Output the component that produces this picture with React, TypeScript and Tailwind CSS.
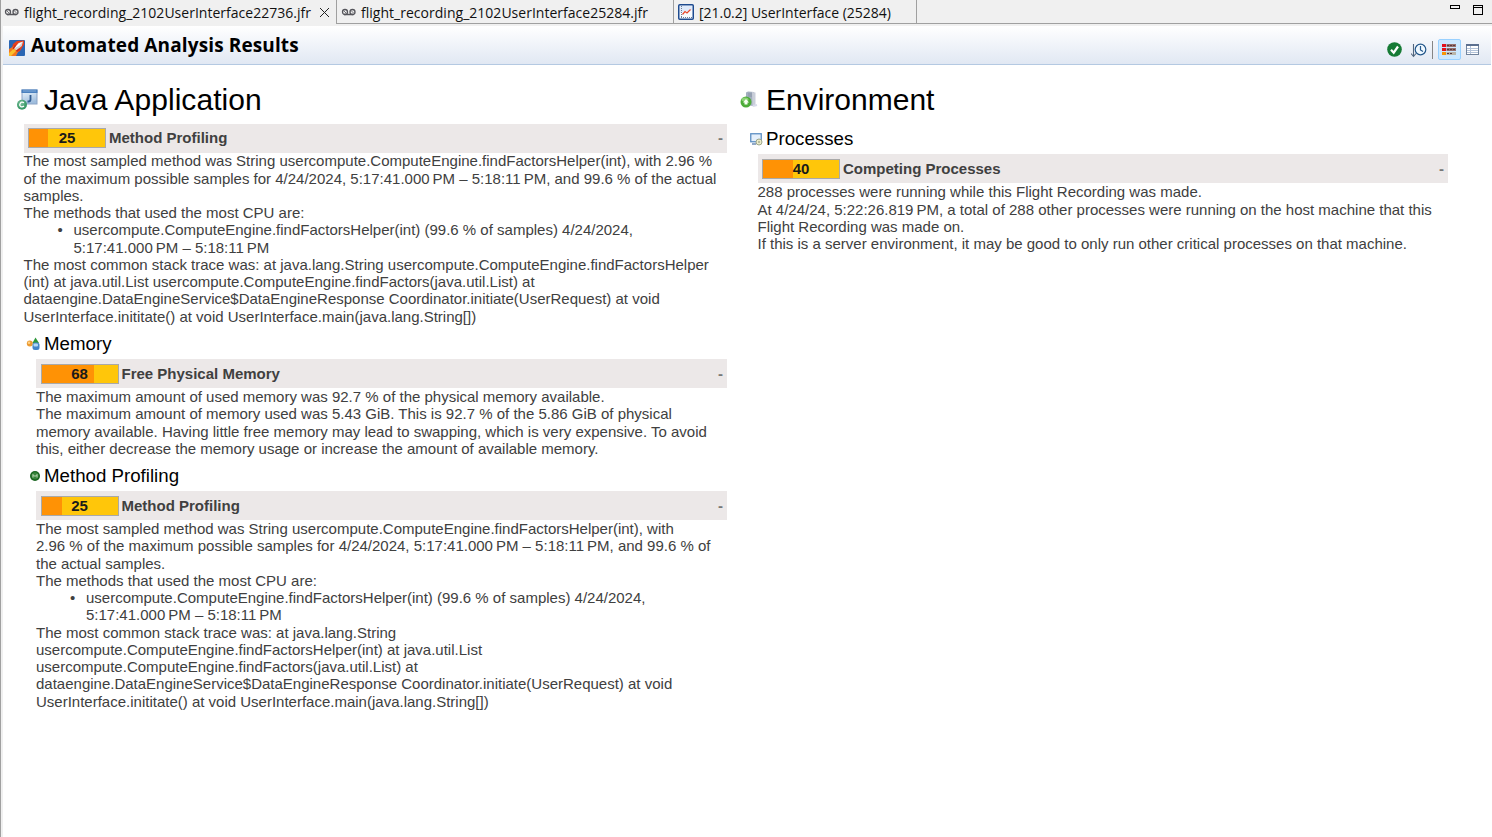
import React from "react";

function TapeIcon() {
  return (
    <svg width="16" height="16" viewBox="0 0 16 16" fill="none" stroke="#55555b" className="shrink-0">
      <circle cx="4" cy="8" r="2.5" strokeWidth="1.3" />
      <circle cx="11.5" cy="8" r="2.5" strokeWidth="1.3" />
      <path d="M3 10.5h9.5" strokeWidth="1.5" />
      <path d="M3 7l2 2M10.5 7l2 2" strokeWidth="0.8" />
    </svg>
  );
}

function ChartIcon() {
  return (
    <svg width="16" height="16" viewBox="0 0 16 16" className="shrink-0">
      <rect x="0.75" y="0.75" width="14.5" height="14.5" rx="1" fill="#f8fbff" stroke="#1d4a8f" strokeWidth="1.5" />
      <path d="M2 2h12v4L2 9z" fill="#dfeafa" />
      <path d="M3.5 2v11.5M3 13.5h11" stroke="#6c7c96" strokeWidth="1" strokeDasharray="1 1" fill="none" />
      <path d="M4.500 10.500l2.500-3 2 1.500L12.500 5.500" stroke="#e8482a" strokeWidth="1.200" fill="none" />
    </svg>
  );
}

function FlightIcon() {
  return (
    <svg width="16" height="16" viewBox="0 0 16 16" className="shrink-0">
      <rect width="16" height="16" rx="1" fill="#2a66b4" />
      <path d="M4 4L8 1l7-.5v4L11 11l-2 1-6-4z" fill="#e8401c" />
      <path d="M0 9l5-3 5 4-3 6H0z" fill="#f4771f" />
      <path d="M0 13l5-4.500L7 11l-5 5H0z" fill="#fbc02c" />
      <path d="M5 8.500L9.500 3 14 1.500 12.800 6 7.500 10.500z" fill="#d3d3da" />
      <path d="M5.500 8L10 3.300l3.500-1.300L10 6z" fill="#ffffff" />
      <path d="M3.500 8L6 5l1 .5-2.500 4zM8 12l3-2.500-.5-1.500L7 10.500z" fill="#c92a1a" />
    </svg>
  );
}

function JavaIcon() {
  return (
    <svg width="22" height="22" viewBox="0 0 22 22" className="shrink-0">
      <defs>
        <linearGradient id="jw" x2="0.3" y2="1">
          <stop stopColor="#f1f9fe" />
          <stop offset="1" stopColor="#9fbddd" />
        </linearGradient>
        <radialGradient id="jc" cx="0.4" cy="0.35">
          <stop stopColor="#80c4a0" />
          <stop offset="1" stopColor="#3c9a69" />
        </radialGradient>
      </defs>
      <rect x="6" y="1" width="15" height="14" fill="url(#jw)" stroke="#8ba4c6" />
      <rect x="5.500" y=".5" width="16" height="3.500" fill="#4a80be" />
      <path d="M7 2h13" stroke="#80aad8" />
      <path d="M14.500 6v4.500q0 2-2 2h-1" stroke="#315c91" strokeWidth="1.800" fill="none" />
      <circle cx="6" cy="15.800" r="5" fill="url(#jc)" />
      <path d="M8 13.800Q5.500 12.300 4.200 14.500T5.200 17.800q1.500.5 2.800-.8" stroke="white" strokeWidth="1.300" fill="none" />
    </svg>
  );
}

function ServerIcon() {
  return (
    <svg width="18" height="18" viewBox="0 0 18 18" className="shrink-0">
      <path d="M6 1.500L8 .5l6 .5 1 12-2 2-7-1z" fill="#a3afbf" />
      <path d="M12 1l3.500.5v13l-3 1z" fill="#c9ced9" />
      <path d="M8 3h4M8 5h4" stroke="#8793a6" />
      <path d="M13 15l4-1" stroke="#d9dbea" strokeWidth="2" />
      <circle cx="6" cy="11" r="5.500" fill="#4dac38" />
      <ellipse cx="5" cy="8.500" rx="3.500" ry="2" fill="#8bd177" />
      <path d="M6 8l3 3.500H7.500V13.500h-3v-2H3z" fill="#f7fff2" />
    </svg>
  );
}

function MemoryIcon() {
  return (
    <svg width="14" height="14" viewBox="0 0 14 14" className="shrink-0">
      <circle cx="3.800" cy="6.500" r="3" fill="#eb9a32" />
      <circle cx="3" cy="5.700" r="1.300" fill="#ffd184" />
      <path d="M9.500 .5l3.500 5.500H6.500z" fill="#2d9639" />
      <rect x="6.500" y="5.500" width="7" height="7.500" rx="2.500" fill="#4384ca" />
      <rect x="7.500" y="6.500" width="4.500" height="3" rx="1" fill="#b4d8f5" />
    </svg>
  );
}

function MethodIcon() {
  return (
    <svg width="10" height="10" viewBox="0 0 10 10" className="shrink-0">
      <circle cx="5" cy="5" r="5" fill="#19651f" />
      <circle cx="5" cy="4.700" r="3.500" fill="#38843c" />
      <path d="M3 6.500v-3L5 5.500l2-2v3" stroke="#d2e8ca" strokeWidth="0.900" fill="none" />
    </svg>
  );
}

function ProcessIcon() {
  return (
    <svg width="13" height="13" viewBox="0 0 13 13" className="shrink-0">
      <rect x="0.750" y="0.750" width="10.500" height="8" fill="#e4effb" stroke="#5c8fc4" strokeWidth="1.300" />
      <path d="M2 11h4" stroke="#6c8db3" strokeWidth="1.500" />
      <circle cx="9" cy="9" r="3" fill="#ececc9" stroke="#9da68b" />
      <circle cx="9" cy="9" r="1" fill="#a8ae8f" />
    </svg>
  );
}

function Tab({ icon, label, className }: { icon: React.ReactNode; label: string; className: string }) {
  return (
    <div className={"flex h-6 shrink-0 items-center whitespace-nowrap border-r border-[#a0a0a0] " + className}>
      {icon}
      {label}
    </div>
  );
}

function ScoreBar({ score, title, split, inset }: { score: number; title: string; split: number; inset: string }) {
  return (
    <div className={"flex h-[29px] items-center bg-[#ece8e8] pr-1 font-bold text-[#404040] " + inset}>
      <div className="grid h-5 w-[78px] border border-[#a9a9a9] bg-[#ffc60a] text-center leading-[18px] text-[#1a1a1a]">
        <div className="col-start-1 row-start-1 bg-[#ff9205]" style={{ width: split }} />
        <span className="col-start-1 row-start-1">{score}</span>
      </div>
      <span className="ml-[3px] grow">{title}</span>
      <span className="text-[#777]">-</span>
    </div>
  );
}

function Lines({ items }: { items: string[] }) {
  return (
    <div className="leading-[17.25px] text-[#404040]">
      {items.map((t) =>
        t.startsWith("* ") ? (
          <div key={t} className="flex whitespace-pre">
            <span className="w-[50px] pl-[34px]">•</span>
            <span>{t.slice(2)}</span>
          </div>
        ) : t.startsWith("> ") ? (
          <div key={t} className="whitespace-pre pl-[50px]">{t.slice(2)}</div>
        ) : (
          <div key={t} className="whitespace-pre">{t}</div>
        )
      )}
    </div>
  );
}

const appProfiling = [
  "The most sampled method was String usercompute.ComputeEngine.findFactorsHelper(int), with 2.96 %",
  "of the maximum possible samples for 4/24/2024, 5:17:41.000\u202fPM – 5:18:11\u202fPM, and 99.6 % of the actual",
  "samples.",
  "The methods that used the most CPU are:",
  "* usercompute.ComputeEngine.findFactorsHelper(int) (99.6 % of samples) 4/24/2024,",
  "> 5:17:41.000\u202fPM – 5:18:11\u202fPM",
  "The most common stack trace was: at java.lang.String usercompute.ComputeEngine.findFactorsHelper",
  "(int) at java.util.List usercompute.ComputeEngine.findFactors(java.util.List) at",
  "dataengine.DataEngineService$DataEngineResponse Coordinator.initiate(UserRequest) at void",
  "UserInterface.inititate() at void UserInterface.main(java.lang.String[])",
];

const memory = [
  "The maximum amount of used memory was 92.7 % of the physical memory available.",
  "The maximum amount of memory used was 5.43 GiB. This is 92.7 % of the 5.86 GiB of physical",
  "memory available. Having little free memory may lead to swapping, which is very expensive. To avoid",
  "this, either decrease the memory usage or increase the amount of available memory.",
];

const profiling = [
  "The most sampled method was String usercompute.ComputeEngine.findFactorsHelper(int), with",
  "2.96 % of the maximum possible samples for 4/24/2024, 5:17:41.000\u202fPM – 5:18:11\u202fPM, and 99.6 % of",
  "the actual samples.",
  "The methods that used the most CPU are:",
  "* usercompute.ComputeEngine.findFactorsHelper(int) (99.6 % of samples) 4/24/2024,",
  "> 5:17:41.000\u202fPM – 5:18:11\u202fPM",
  "The most common stack trace was: at java.lang.String",
  "usercompute.ComputeEngine.findFactorsHelper(int) at java.util.List",
  "usercompute.ComputeEngine.findFactors(java.util.List) at",
  "dataengine.DataEngineService$DataEngineResponse Coordinator.initiate(UserRequest) at void",
  "UserInterface.inititate() at void UserInterface.main(java.lang.String[])",
];

const processes = [
  "288 processes were running while this Flight Recording was made.",
  "At 4/24/24, 5:22:26.819\u202fPM, a total of 288 other processes were running on the host machine that this",
  "Flight Recording was made on.",
  "If this is a server environment, it may be good to only run other critical processes on that machine.",
];

export default function App() {
  return (
    <div className="flex h-[837px] w-[1492px] flex-col overflow-hidden border-l border-[#a0a0a0] bg-[#f0f0f0] font-['Liberation_Sans',sans-serif] text-[15px] text-black">
      <div className="flex h-[26px] shrink-0 font-['Open_Sans',sans-serif] text-[14px] text-[#111]">
        <Tab icon={<><TapeIcon /><span className="w-[4px]" /></>} label="flight_recording_2102UserInterface22736.jfr" className="w-[336px] pl-[3px] tracking-[0.02px]" />
        <svg width="11" height="11" viewBox="0 0 11 11" stroke="#222" strokeWidth="1" className="-ml-[18px] mr-[7px] mt-[7px] shrink-0">
          <path d="M1 1l9 9M10 1l-9 9" />
        </svg>
        <div className="flex h-6 grow border-b border-[#a0a0a0]">
          <Tab icon={<><TapeIcon /><span className="w-[4px]" /></>} label="flight_recording_2102UserInterface25284.jfr" className="w-[337px] pl-1 tracking-[0.02px]" />
          <Tab icon={<><ChartIcon /><span className="w-[5px]" /></>} label="[21.0.2] UserInterface (25284)" className="w-[243px] pl-1 tracking-[-0.03px]" />
          <div className="flex grow justify-end pr-[8px]">
            <svg width="34" height="16" viewBox="0 0 34 16" fill="none" stroke="black" shapeRendering="crispEdges">
              <path d="M.5 5.500h9v3h-9zM23.500 5.500h9v9h-9zM23 7.500h10" />
            </svg>
          </div>
        </div>
      </div>

      <div className="flex grow flex-col border-l-2 border-[#f0f0f0] bg-white">
        <header className="mr-px flex h-[39px] shrink-0 items-center border-b border-[#b4c9e2] bg-gradient-to-b from-white to-[#e1e8f3]">
          <div className="ml-[6px] mt-[5px]"><FlightIcon /></div>
          <h1 className="mt-px ml-[6px] grow font-['Open_Sans',sans-serif] text-[19px] font-bold tracking-[0.12px]">Automated Analysis Results</h1>
          <div className="mt-[9px] flex h-[22px] items-center">
            <svg width="15" height="15" viewBox="0 0 15 15">
              <circle cx="7.500" cy="7.500" r="7.300" fill="#167b35" />
              <path d="M4 7.700l2.700 3L11 4.500" stroke="white" strokeWidth="2.200" fill="none" />
            </svg>
            <svg width="16" height="16" viewBox="0 0 16 16" fill="none" className="ml-[9px]">
              <path d="M2.500 2v12M0 11.500l2.500 3 2.500-3" stroke="#50657d" strokeWidth="1.100" />
              <circle cx="9.500" cy="7.500" r="5.300" fill="#eff8ff" stroke="#24588b" strokeWidth="1.200" />
              <path d="M9.500 4v4l2.500 1.500" stroke="#24588b" strokeWidth="1.200" />
            </svg>
            <div className="ml-[5px] h-[18px] w-px bg-[#858585]" />
            <div className="ml-[5px] flex h-[21px] w-[23px] items-center justify-center rounded-[2px] border border-[#99d1ff] bg-[#cce8ff]">
              <svg width="15" height="12" viewBox="0 0 15 12">
                <path d="M0 0h4v3H0zM0 4h4v3H0z" fill="#e3111c" />
                <path d="M0 8h4v3H0z" fill="#f69609" />
                <path d="M4.500 0H14v3H4.500zM4.500 4H14v3H4.500z" fill="#96706e" />
                <path d="M4.500 8H14v3H4.500z" fill="#b9b5a9" />
                <path d="M5 1.500h9M5 5.500h9M5 9.500h6" stroke="#59393d" strokeDasharray="2 1" />
              </svg>
            </div>
            <svg width="14" height="12" viewBox="0 0 14 12" className="ml-[5px] mr-[11px]" shapeRendering="crispEdges">
              <rect x=".5" y=".5" width="12" height="10" fill="white" stroke="#71839c" />
              <path d="M0 0h13v2H0z" fill="#5c7090" />
              <path d="M4.500 2v8M1 4.500h11M1 6.500h11M1 8.500h11" stroke="#b3c3d9" />
            </svg>
          </div>
        </header>

        <main className="flex pl-[13px]">
          <section className="w-[711px]">
            <h2 className="flex h-[59px] items-center pt-[10px] text-[30px] tracking-[0.06px]">
              <JavaIcon />
              <span className="ml-[6px]">Java Application</span>
            </h2>
            <div className="pl-[8px]">
              <ScoreBar score={25} title="Method Profiling" split={19} inset="pb-px pl-[4px]" />
              <div className="-ml-[0.500px] -mt-[0.750px] mb-[0.750px]"><Lines items={appProfiling} /></div>
            </div>
            <h3 className="flex h-[33.500px] items-center pl-[10px] pt-[4px] text-[18.700px]">
              <MemoryIcon />
              <span className="ml-[4px]">Memory</span>
            </h3>
            <div className="pl-[20px]">
              <ScoreBar score={68} title="Free Physical Memory" split={52} inset="pt-px pl-[4.500px]" />
              <Lines items={memory} />
            </div>
            <h3 className="flex h-[34px] items-center pl-[14px] pt-[4px] text-[18.700px]">
              <MethodIcon />
              <span className="ml-[4px]">Method Profiling</span>
            </h3>
            <div className="pl-[20px]">
              <ScoreBar score={25} title="Method Profiling" split={20} inset="pt-px pl-[4.500px]" />
              <Lines items={profiling} />
            </div>
          </section>

          <section className="ml-[13px] w-[708px]">
            <h2 className="flex h-[59px] items-center pt-[10px] text-[30px]">
              <ServerIcon />
              <span className="ml-[8px]">Environment</span>
            </h2>
            <h3 className="flex h-[30px] items-center pl-[10px] text-[18.700px]">
              <ProcessIcon />
              <span className="ml-[3px]">Processes</span>
            </h3>
            <div className="pl-[18px]">
              <ScoreBar score={40} title="Competing Processes" split={30} inset="pt-px pl-[4px]" />
              <div className="-ml-[0.500px] pt-[0.250px]"><Lines items={processes} /></div>
            </div>
          </section>
        </main>
      </div>
    </div>
  );
}
